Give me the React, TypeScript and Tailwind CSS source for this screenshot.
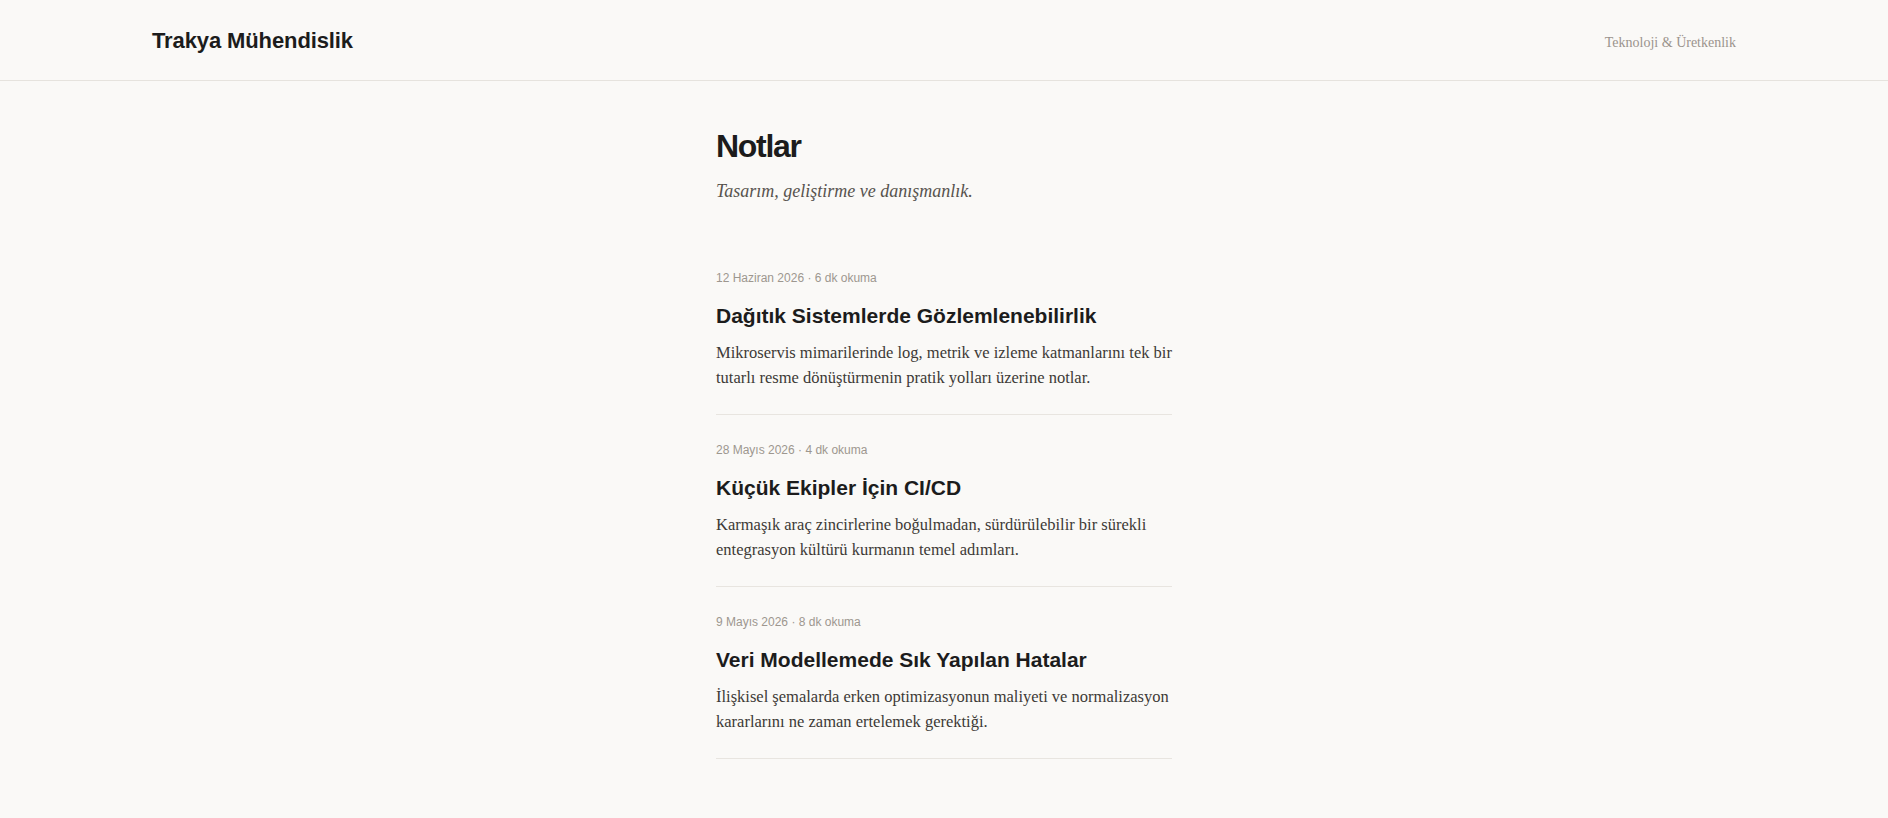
import React from 'react';

const serif = "font-['Georgia','Liberation_Serif',serif]";
const sans = "font-['Liberation_Sans','Arial',sans-serif]";

const notes = [
  {
    date: '12 Haziran 2026',
    read: '6 dk okuma',
    title: 'Dağıtık Sistemlerde Gözlemlenebilirlik',
    excerpt:
      'Mikroservis mimarilerinde log, metrik ve izleme katmanlarını tek bir tutarlı resme dönüştürmenin pratik yolları üzerine notlar.',
  },
  {
    date: '28 Mayıs 2026',
    read: '4 dk okuma',
    title: 'Küçük Ekipler İçin CI/CD',
    excerpt:
      'Karmaşık araç zincirlerine boğulmadan, sürdürülebilir bir sürekli entegrasyon kültürü kurmanın temel adımları.',
  },
  {
    date: '9 Mayıs 2026',
    read: '8 dk okuma',
    title: 'Veri Modellemede Sık Yapılan Hatalar',
    excerpt:
      'İlişkisel şemalarda erken optimizasyonun maliyeti ve normalizasyon kararlarını ne zaman ertelemek gerektiği.',
  },
];

export default function App() {
  return (
    <div className="min-h-screen bg-[#faf9f7] text-[#1c1c1c]">
      <header className="h-[81px] border-b border-[#e6e3de] px-[152px] flex items-center justify-between">
        <a className={`${sans} text-[22px] font-bold tracking-[-0.005em] text-[#1c1c1c]`}>Trakya Mühendislik</a>
        <span className={`${serif} text-[14px] text-[#9a948d] mt-[5px]`}>Teknoloji &amp; Üretkenlik</span>
      </header>

      <main className="w-[456px] mx-auto pt-[46px] pb-16">
        <h1 className={`${sans} text-[32px] leading-[1.2] font-bold tracking-[-0.04em] text-[#1c1c1c]`}>Notlar</h1>
        <p className={`${serif} italic text-[18px] leading-6 text-[#57534e] mt-[14px]`}>
          Tasarım, geliştirme ve danışmanlık.
        </p>

        <div className="mt-[40px]">
          {notes.map((n) => (
            <article key={n.title} className="pt-[27px] pb-[24px] border-b border-[#e8e5e0]">
              <div className={`${sans} text-[12px] leading-4 text-[#9d978f]`}>
                {n.date} · {n.read}
              </div>
              <h2 className={`${sans} text-[21px] leading-7 font-bold text-[#1c1c1c] mt-4`}>{n.title}</h2>
              <p className={`${serif} text-[16.5px] leading-[25px] text-[#3d3a36] mt-[10px]`}>{n.excerpt}</p>
            </article>
          ))}
        </div>
      </main>
    </div>
  );
}
